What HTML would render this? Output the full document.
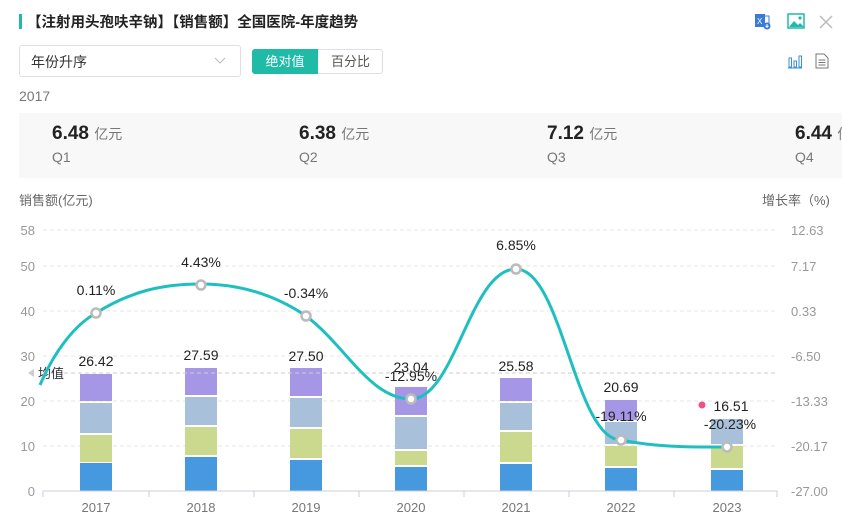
<!DOCTYPE html>
<html><head><meta charset="utf-8"><style>
*{margin:0;padding:0;box-sizing:border-box}
body{width:842px;height:521px;background:#fff;font-family:"Liberation Sans","Noto Sans CJK SC",sans-serif;position:relative;overflow:hidden;color:#333}
.a{position:absolute;white-space:nowrap}
</style></head><body>
<div class="a" style="left:19px;top:14px;width:3px;height:15px;background:#1fbba6"></div>
<div class="a" style="left:27px;top:11px;font-size:14.5px;font-weight:bold;color:#222">【注射用头孢呋辛钠】【销售额】全国医院-年度趋势</div>
<svg class="a" style="left:754px;top:12px" width="18" height="18" viewBox="0 0 18 18"><rect x="1" y="2" width="10" height="13" fill="#3a7bd5"/><text x="3" y="12" font-size="8" fill="#fff" font-family="Liberation Sans">X</text><rect x="10" y="4" width="5" height="8" fill="none" stroke="#3a7bd5"/><circle cx="13" cy="14" r="3.5" fill="#3a7bd5"/><path d="M13 12v3M11.5 13.8l1.5 1.5 1.5-1.5" stroke="#fff" fill="none"/></svg>
<svg class="a" style="left:787px;top:13px" width="18" height="16" viewBox="0 0 18 16"><rect x="1" y="1" width="16" height="14" fill="none" stroke="#1fbba6" stroke-width="1.5"/><path d="M2 14l5-6 4 4 2-2 4 4z" fill="#1fbba6"/><circle cx="13" cy="5" r="1.6" fill="#1fbba6"/></svg>
<svg class="a" style="left:819px;top:15px" width="14" height="14"><path d="M1 1L13 13M13 1L1 13" stroke="#bbb" stroke-width="1.5"/></svg>
<div class="a" style="left:19px;top:45px;width:222px;height:32px;border:1px solid #dcdfe6;border-radius:3px"></div>
<div class="a" style="left:31px;top:52px;font-size:14px;color:#333">年份升序</div>
<svg class="a" style="left:214px;top:57px" width="12" height="8"><path d="M1 1l5 5 5-5" stroke="#bbb" fill="none"/></svg>
<div class="a" style="left:252px;top:49px;width:131px;height:25px;border:1px solid #dcdfe6;border-radius:3px"></div>
<div class="a" style="left:252px;top:49px;width:66px;height:25px;background:#1fbba6;border-radius:3px 0 0 3px;color:#fff;font-size:13px;text-align:center;line-height:25px">绝对值</div>
<div class="a" style="left:318px;top:49px;width:65px;height:25px;color:#555;font-size:13px;text-align:center;line-height:25px">百分比</div>
<svg class="a" style="left:787px;top:53px" width="16" height="16"><path d="M1 15h14" stroke="#3a8fd5"/><rect x="2" y="5" width="2.5" height="9" fill="none" stroke="#3a8fd5"/><rect x="7" y="8" width="2.5" height="6" fill="none" stroke="#3a8fd5"/><rect x="12" y="3" width="2.5" height="11" fill="none" stroke="#3a8fd5"/></svg>
<svg class="a" style="left:815px;top:53px" width="14" height="16"><path d="M1 1h8l4 4v10H1z" fill="none" stroke="#777"/><path d="M3.5 7h7M3.5 9.5h7M3.5 12h7" stroke="#777"/></svg>
<div class="a" style="left:19px;top:88px;font-size:14px;color:#777">2017</div>
<div class="a" style="left:19px;top:113px;width:823px;height:65px;background:#f8f8f8"></div>
<div class="a" style="left:52px;top:123px;font-size:19px"><b style="color:#222">6.48</b> <span style="font-size:14px;color:#777">亿元</span></div>
<div class="a" style="left:299px;top:123px;font-size:19px"><b style="color:#222">6.38</b> <span style="font-size:14px;color:#777">亿元</span></div>
<div class="a" style="left:547px;top:123px;font-size:19px"><b style="color:#222">7.12</b> <span style="font-size:14px;color:#777">亿元</span></div>
<div class="a" style="left:795px;top:123px;font-size:19px"><b style="color:#222">6.44</b> <span style="font-size:14px;color:#777">亿元</span></div>
<div class="a" style="left:52px;top:149px;font-size:14px;color:#777">Q1</div>
<div class="a" style="left:299px;top:149px;font-size:14px;color:#777">Q2</div>
<div class="a" style="left:547px;top:149px;font-size:14px;color:#777">Q3</div>
<div class="a" style="left:795px;top:149px;font-size:14px;color:#777">Q4</div>
<div class="a" style="left:19px;top:190px;font-size:13px;color:#666">销售额(亿元)</div>
<div class="a" style="left:762px;top:190px;font-size:13px;color:#666">增长率（%)</div>
<svg class="a" style="left:0;top:0" width="842" height="521" font-family="Liberation Sans,sans-serif">
<g stroke="#e6e6e6" stroke-dasharray="4,3">
<path d="M43 230H777M43 266H777M43 311H777M43 356H777M43 401H777M43 446H777"/></g>
<g font-size="13" fill="#999" text-anchor="end">
<text x="35" y="235">58</text><text x="35" y="271">50</text><text x="35" y="316">40</text><text x="35" y="361">30</text><text x="35" y="406">20</text><text x="35" y="451">10</text><text x="35" y="496">0</text></g>
<g font-size="13" fill="#999">
<text x="791" y="235">12.63</text><text x="791" y="271">7.17</text><text x="791" y="316">0.33</text><text x="791" y="361">-6.50</text><text x="791" y="406">-13.33</text><text x="791" y="451">-20.17</text><text x="791" y="496">-27.00</text></g>
<g>
<rect x="80" y="463" width="32" height="28" fill="#4799df"/><rect x="80" y="435" width="32" height="27" fill="#cbd98f"/><rect x="80" y="403" width="32" height="30" fill="#a8c0da"/><rect x="80" y="374" width="32" height="27" fill="#a597e6"/>
<rect x="185" y="457" width="32" height="34" fill="#4799df"/><rect x="185" y="427" width="32" height="28" fill="#cbd98f"/><rect x="185" y="397" width="32" height="28" fill="#a8c0da"/><rect x="185" y="368" width="32" height="27" fill="#a597e6"/>
<rect x="290" y="460" width="32" height="31" fill="#4799df"/><rect x="290" y="429" width="32" height="29" fill="#cbd98f"/><rect x="290" y="398" width="32" height="29" fill="#a8c0da"/><rect x="290" y="368" width="32" height="28" fill="#a597e6"/>
<rect x="395" y="467" width="32" height="24" fill="#4799df"/><rect x="395" y="451" width="32" height="14" fill="#cbd98f"/><rect x="395" y="417" width="32" height="32" fill="#a8c0da"/><rect x="395" y="387" width="32" height="28" fill="#a597e6"/>
<rect x="500" y="464" width="32" height="27" fill="#4799df"/><rect x="500" y="432" width="32" height="30" fill="#cbd98f"/><rect x="500" y="403" width="32" height="27" fill="#a8c0da"/><rect x="500" y="378" width="32" height="23" fill="#a597e6"/>
<rect x="605" y="468" width="32" height="23" fill="#4799df"/><rect x="605" y="446" width="32" height="20" fill="#cbd98f"/><rect x="605" y="422" width="32" height="22" fill="#a8c0da"/><rect x="605" y="400" width="32" height="20" fill="#a597e6"/>
<rect x="711" y="470" width="32" height="21" fill="#4799df"/><rect x="711" y="446" width="32" height="22" fill="#cbd98f"/><rect x="711" y="419" width="32" height="25" fill="#a8c0da"/>
</g>
<path d="M43 373H777" stroke="#ccc" stroke-dasharray="4,3"/>
<path d="M28 373l6-4v8z" fill="#ccc"/>
<text x="38" y="378" font-size="13" fill="#333" font-family="Liberation Sans,Noto Sans CJK SC,sans-serif">均值</text>
<path d="M43 491H777" stroke="#ccd"/>
<g stroke="#ccd"><path d="M43 491v6M149 491v6M254 491v6M359 491v6M464 491v6M569 491v6M674 491v6M777 491v6"/></g>
<g font-size="13" fill="#777" text-anchor="middle">
<text x="96" y="512">2017</text><text x="201" y="512">2018</text><text x="306" y="512">2019</text><text x="411" y="512">2020</text><text x="516" y="512">2021</text><text x="621" y="512">2022</text><text x="727" y="512">2023</text></g>
<path d="M40 385C55 350 75 325 96 313C130 292 160 284 201 284C240 284 275 295 306 316C345 345 370 399 411 399C455 399 470 269 516 269C562 269 575 440 621 440C660 448 700 447 727 447" fill="none" stroke="#1fbfbf" stroke-width="3"/>
<g fill="#fff" stroke="#bbb" stroke-width="2.5">
<circle cx="96" cy="313" r="4.5"/><circle cx="201" cy="285" r="4.5"/><circle cx="306" cy="316" r="4.5"/><circle cx="411" cy="399" r="4.5"/><circle cx="516" cy="269" r="4.5"/><circle cx="621" cy="440" r="4.5"/><circle cx="727" cy="447" r="4.5"/></g>
<g font-size="14" fill="#222" text-anchor="middle">
<text x="96" y="295">0.11%</text><text x="201" y="267">4.43%</text><text x="306" y="298">-0.34%</text><text x="516" y="250">6.85%</text>
<text x="96" y="366">26.42</text><text x="201" y="360">27.59</text><text x="306" y="361">27.50</text><text x="411" y="372">23.04</text><text x="411" y="381">-12.95%</text><text x="516" y="371">25.58</text><text x="621" y="392">20.69</text><text x="621" y="421">-19.11%</text><text x="730" y="429">-20.23%</text>
<text x="731" y="411">16.51</text></g>
<circle cx="702" cy="405" r="3.5" fill="#f0508a"/>
</svg>
</body></html>
